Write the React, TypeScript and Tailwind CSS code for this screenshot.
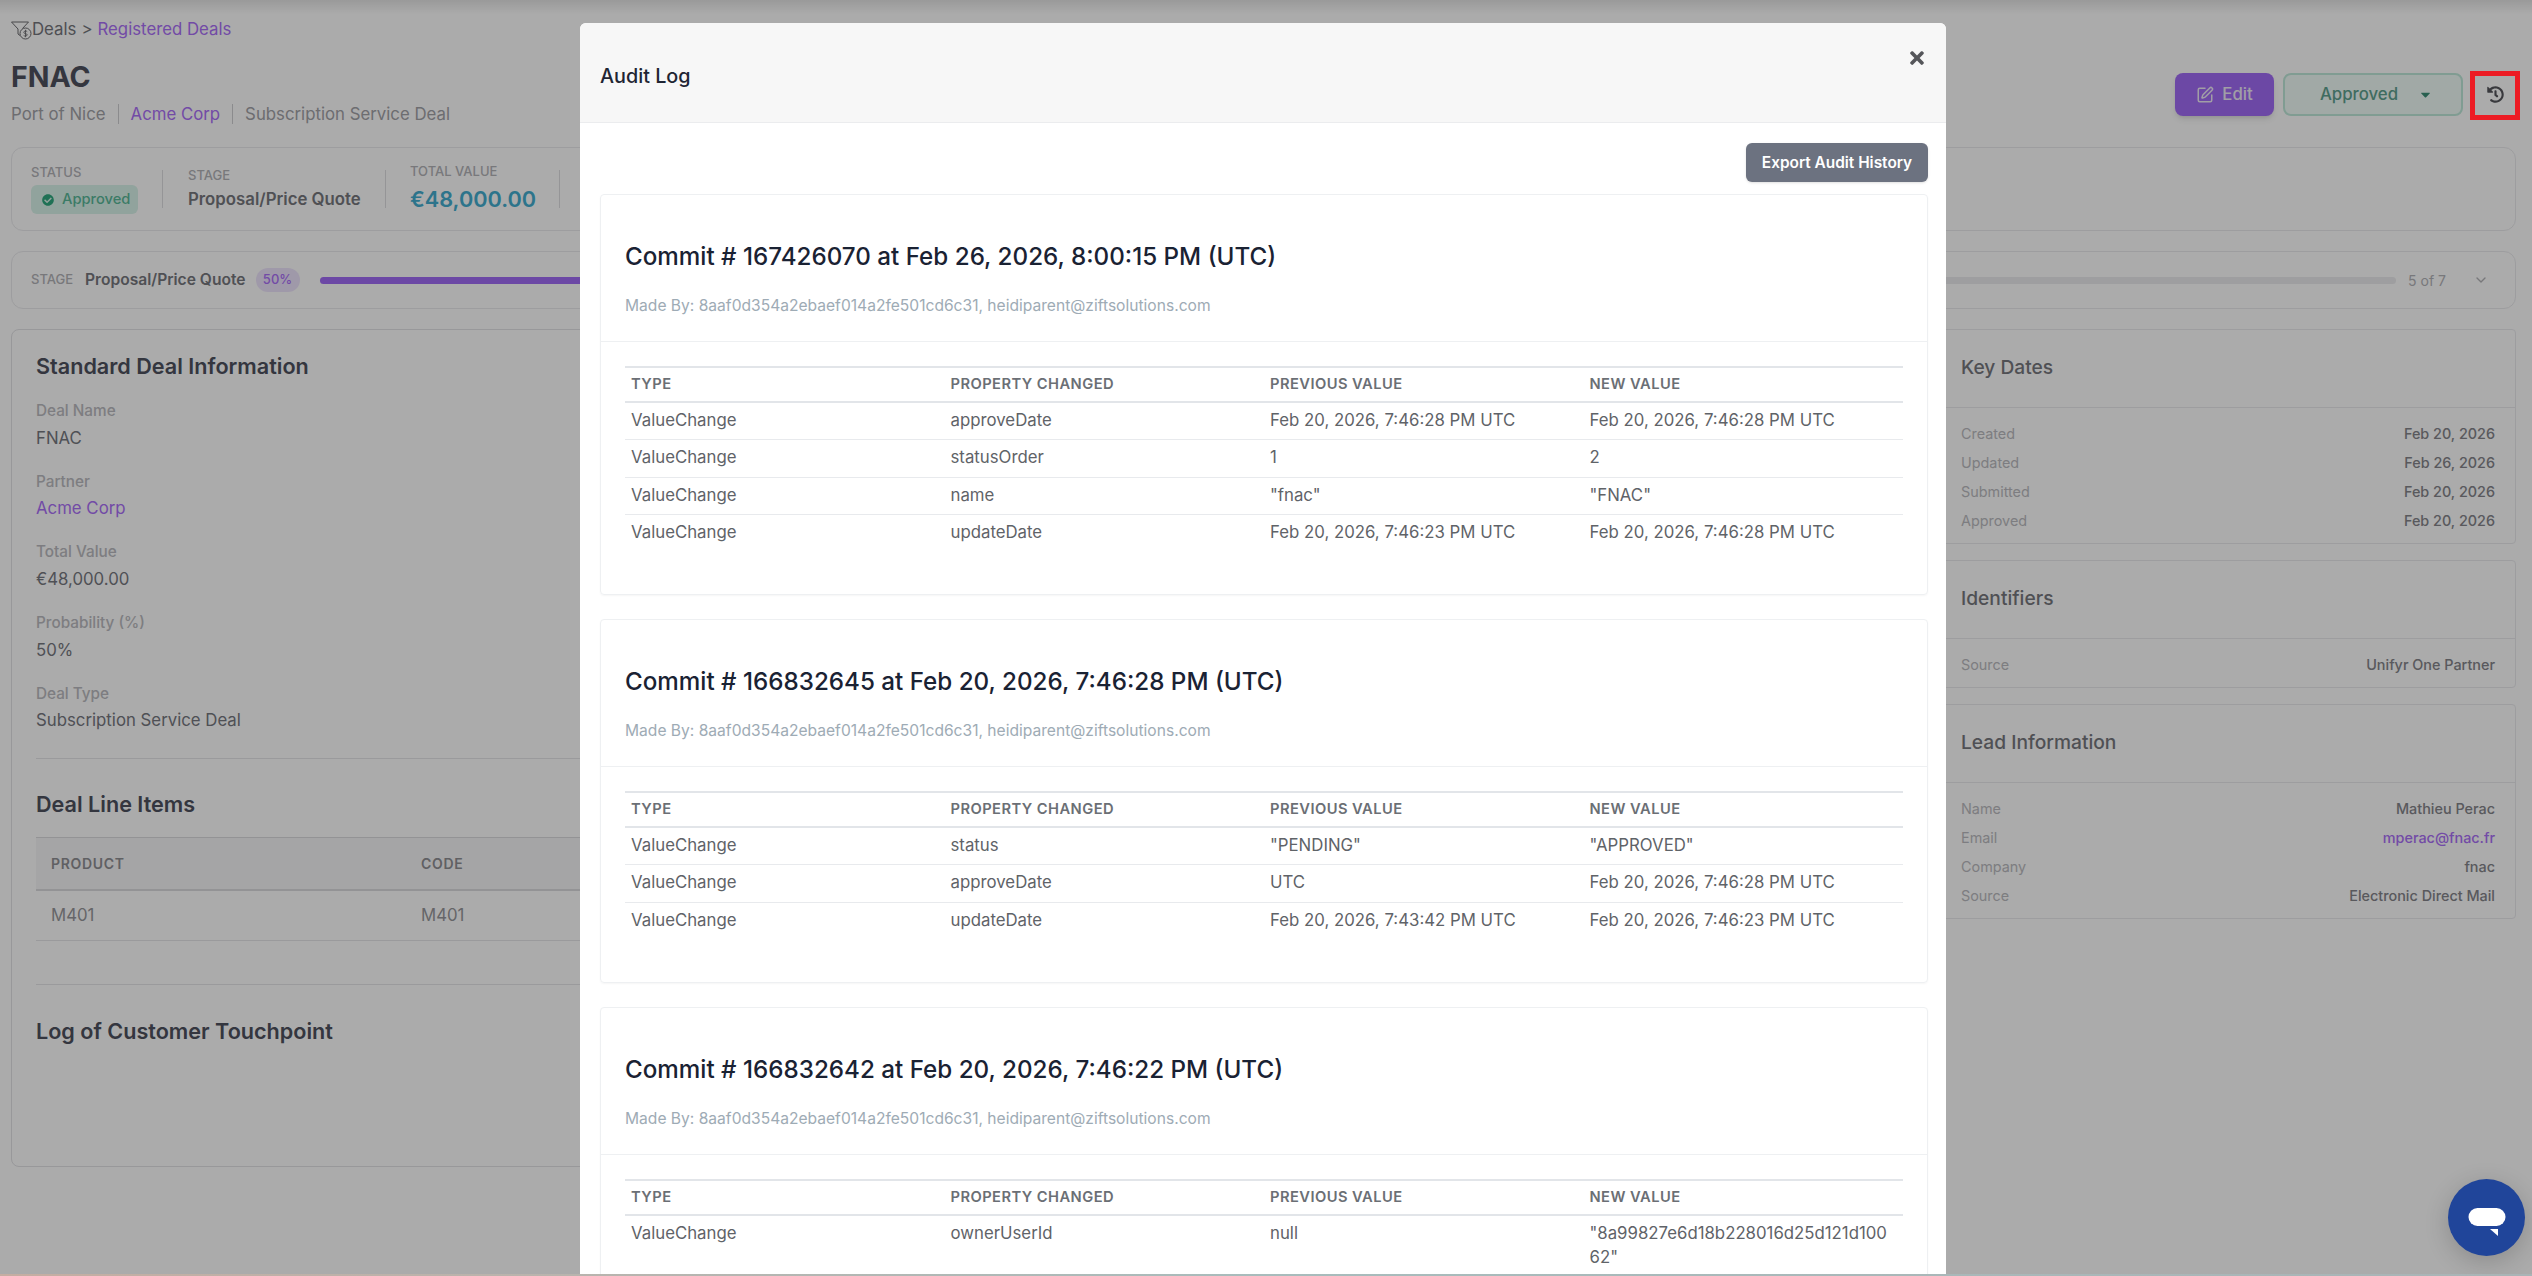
import { ChevronDown, SquarePen } from 'lucide-react'
import { FaCaretDown, FaCheckCircle, FaHistory, FaTimes } from 'react-icons/fa'

const fontInter = { fontFamily: 'Inter, "Noto Sans", sans-serif' }

interface Change {
  type: string
  property: string
  previous: string
  next: string
}

interface Commit {
  title: string
  changes: Change[]
}

const commits: Commit[] = [
  {
    title: 'Commit # 167426070 at Feb 26, 2026, 8:00:15 PM (UTC)',
    changes: [
      { type: 'ValueChange', property: 'approveDate', previous: 'Feb 20, 2026, 7:46:28 PM UTC', next: 'Feb 20, 2026, 7:46:28 PM UTC' },
      { type: 'ValueChange', property: 'statusOrder', previous: '1', next: '2' },
      { type: 'ValueChange', property: 'name', previous: '"fnac"', next: '"FNAC"' },
      { type: 'ValueChange', property: 'updateDate', previous: 'Feb 20, 2026, 7:46:23 PM UTC', next: 'Feb 20, 2026, 7:46:28 PM UTC' },
    ],
  },
  {
    title: 'Commit # 166832645 at Feb 20, 2026, 7:46:28 PM (UTC)',
    changes: [
      { type: 'ValueChange', property: 'status', previous: '"PENDING"', next: '"APPROVED"' },
      { type: 'ValueChange', property: 'approveDate', previous: 'UTC', next: 'Feb 20, 2026, 7:46:28 PM UTC' },
      { type: 'ValueChange', property: 'updateDate', previous: 'Feb 20, 2026, 7:43:42 PM UTC', next: 'Feb 20, 2026, 7:46:23 PM UTC' },
    ],
  },
  {
    title: 'Commit # 166832642 at Feb 20, 2026, 7:46:22 PM (UTC)',
    changes: [
      { type: 'ValueChange', property: 'ownerUserId', previous: 'null', next: '"8a99827e6d18b228016d25d121d10062"' },
    ],
  },
]

const dealFields = [
  { label: 'Deal Name', value: 'FNAC' },
  { label: 'Partner', value: 'Acme Corp', link: true },
  { label: 'Total Value', value: '€48,000.00' },
  { label: 'Probability (%)', value: '50%' },
  { label: 'Deal Type', value: 'Subscription Service Deal' },
]

const sideCards = [
  {
    title: 'Key Dates',
    rows: [
      { label: 'Created', value: 'Feb 20, 2026' },
      { label: 'Updated', value: 'Feb 26, 2026' },
      { label: 'Submitted', value: 'Feb 20, 2026' },
      { label: 'Approved', value: 'Feb 20, 2026' },
    ],
  },
  {
    title: 'Identifiers',
    rows: [{ label: 'Source', value: 'Unifyr One Partner' }],
  },
  {
    title: 'Lead Information',
    rows: [
      { label: 'Name', value: 'Mathieu Perac' },
      { label: 'Email', value: 'mperac@fnac.fr', link: true },
      { label: 'Company', value: 'fnac' },
      { label: 'Source', value: 'Electronic Direct Mail' },
    ],
  },
]

function FunnelIcon() {
  return (
    <svg width="21" height="19" viewBox="0 0 21 19" fill="none" stroke="#6c6c70" strokeWidth="1">
      <path d="M0.5 1h17l-6 6.5M0.5 1l6.5 7v5l2 1.5" strokeLinejoin="round" />
      <circle cx="14.5" cy="12.5" r="5.5" />
      <path d="M16.2 10.6c-.6-.8-3.4-.9-3.4.8 0 1.7 3.4.8 3.4 2.4 0 1.6-2.9 1.5-3.5.7M14.5 8.8v7.4" strokeWidth="0.9" />
    </svg>
  )
}

function ChatBubble() {
  return (
    <svg width="38" height="30" viewBox="0 0 38 30" fill="#ffffff">
      <rect x="0.5" y="0" width="37" height="18" rx="9" />
      <path d="M22 21h8v7z" />
    </svg>
  )
}

function DealPage() {
  return (
    <div className="flex flex-col pr-4 pl-[11px]">
      <div className="-mr-4 -ml-[11px] h-[14px] bg-linear-to-b from-black/10 to-transparent" />

      <div className="mt-[7px] flex h-[18px] items-center text-[16.8px] text-[#75767c]">
        <FunnelIcon />
        <span>Deals</span>
        <span className="mx-[5px]">&gt;</span>
        <span className="text-[#ab70f8]">Registered Deals</span>
      </div>

      <div className="flex items-start justify-between">
        <div>
          <h1 className="mt-[20px] text-[28.5px] leading-[36px] font-bold text-[#4e515e]">FNAC</h1>
          <div className="mt-[9px] flex items-center text-[16.8px] leading-5 text-[#a3a3a8]">
            <span className="border-r border-[#cfcfd2] pr-[12px]">Port of Nice</span>
            <span className="border-r border-[#cfcfd2] px-[12px] text-[#ab70f8]">Acme Corp</span>
            <span className="pl-[12px]">Subscription Service Deal</span>
          </div>
        </div>
        <div className="mt-[34px] mr-[-2px] flex items-center gap-[9px]">
          <button className="flex h-[43px] w-[99px] items-center justify-center gap-[8px] rounded-lg bg-[#a26cf7] text-[16.8px] font-medium text-[#f0ecf8] shadow-md">
            <SquarePen size={18} strokeWidth={2} />
            Edit
          </button>
          <button className="flex h-[43px] w-[180px] items-center justify-center gap-[20px] rounded-lg border-2 border-[#bfe9da] bg-[#f0fdf8] pl-[7px] text-[16.8px] font-medium text-[#5fa18f]">
            Approved
            <FaCaretDown size={15} className="text-[#3d8f78]" />
          </button>
          <div className="flex w-[46px] items-center justify-center text-[#55565c]">
            <FaHistory size={17} />
          </div>
        </div>
      </div>

      <div className="mt-[23px] flex h-[84px] items-center rounded-xl border border-[#ebebee] pl-[19px]">
        <div className="flex w-[131px] flex-col self-start pt-[15px]">
          <span className="text-[13px] leading-[18px] font-medium text-[#b3b3b8]">STATUS</span>
          <span className="mt-[4px] flex h-[29px] w-[107px] items-center gap-[8px] rounded-md bg-[#d9f3ea] pl-[11px] text-[14.7px] font-medium text-[#58b898]">
            <FaCheckCircle size={12} className="text-[#2fa97f]" />
            Approved
          </span>
        </div>
        <div className="h-[38px] w-px bg-[#dedee1]" />
        <div className="flex w-[222px] flex-col self-start pt-[18px] pl-[25px]">
          <span className="text-[13px] leading-[18px] font-medium text-[#b3b3b8]">STAGE</span>
          <span className="mt-[3px] text-[16.8px] leading-[24px] font-semibold whitespace-nowrap text-[#77787e]">Proposal/Price Quote</span>
        </div>
        <div className="h-[38px] w-px bg-[#dedee1]" />
        <div className="flex w-[173px] flex-col self-start pt-[14px] pl-[24px]">
          <span className="text-[13px] leading-[18px] font-medium text-[#b3b3b8]">TOTAL VALUE</span>
          <span className="mt-[4px] text-[21.7px] leading-[30px] font-semibold whitespace-nowrap text-[#43aed0]">€48,000.00</span>
        </div>
        <div className="h-[38px] w-px bg-[#dedee1]" />
      </div>

      <div className="mt-5 flex h-[58px] items-center rounded-xl border border-[#ebebee] pr-[26px] pl-[19px]">
        <span className="w-[54px] text-[13px] font-medium text-[#b3b3b8]">STAGE</span>
        <span className="text-[15.6px] font-semibold whitespace-nowrap text-[#77787e]">Proposal/Price Quote</span>
        <span className="ml-[10px] flex h-[24px] w-[44px] items-center justify-center rounded-full bg-[#eee5fd] text-[13px] font-medium text-[#ab70f8]">50%</span>
        <div className="mx-5 h-[7px] flex-1 rounded-full bg-[#ececef]">
          <div className="h-full w-1/2 rounded-full bg-[#a26cf7]" />
        </div>
        <span className="mr-[27px] -ml-[8px] text-[14px] whitespace-nowrap text-[#b3b3b8]">5 of 7</span>
        <ChevronDown size={16} className="text-[#b3b3b8]" />
      </div>

      <div className="mt-5 grid grid-cols-[1fr_576px] gap-6">
        <div className="h-[838px] rounded-lg border border-[#e3e3e6] px-6">
          <h2 className="mt-[21px] text-[21.6px] leading-[30px] font-semibold text-[#4e515e]">Standard Deal Information</h2>
          <div className="mt-[19px] flex flex-col">
            {dealFields.map((field) => (
              <div key={field.label} className="h-[70.7px]">
                <div className="text-[15.3px] leading-[21px] font-medium text-[#bbbbc0]">{field.label}</div>
                <div className={`mt-[4.5px] text-[16.8px] leading-6 ${field.link ? 'text-[#ab70f8]' : 'text-[#76787f]'}`}>{field.value}</div>
              </div>
            ))}
          </div>
          <div className="mt-[4.5px] border-t border-[#e6e6e9]" />
          <h2 className="mt-[30px] text-[21.6px] leading-[30px] font-semibold text-[#4e515e]">Deal Line Items</h2>
          <div className="mt-[18px] flex h-[54px] items-center border-t border-b-2 border-[#dcdcdf] bg-[#f7f7f8] text-[14px] font-semibold tracking-[0.05em] text-[#8f8f94]">
            <span className="w-[385px] pl-[15px]">PRODUCT</span>
            <span>CODE</span>
          </div>
          <div className="flex h-[50px] items-center border-b border-[#e6e6e9] text-[16.8px] text-[#97979c]">
            <span className="w-[385px] pl-[15px]">M401</span>
            <span>M401</span>
          </div>
          <div className="mt-[43px] border-t border-[#e6e6e9]" />
          <h2 className="mt-[31px] text-[21.6px] leading-[30px] font-semibold text-[#4e515e]">Log of Customer Touchpoint</h2>
        </div>

        <div className="flex flex-col gap-[16px]">
          {sideCards.map((card) => (
            <div key={card.title} className="rounded-sm border border-[#ebebee] pb-[12px]">
              <div className="flex h-[78px] items-center border-b border-[#ebebee] pb-[2px] pl-5">
                <h3 className="text-[19.2px] font-medium text-[#77787e]">{card.title}</h3>
              </div>
              <div className="flex flex-col gap-[8px] px-5 pt-[15px]">
                {card.rows.map((row) => (
                  <div key={card.title + row.label} className="flex h-[21px] items-center justify-between text-[14.4px]">
                    <span className="text-[#bbbbc0]">{row.label}</span>
                    <span className={`font-medium ${row.link ? 'text-[#ab70f8]' : 'text-[#85858b]'}`}>{row.value}</span>
                  </div>
                ))}
              </div>
            </div>
          ))}
        </div>
      </div>
    </div>
  )
}

function CommitCard({ commit }: { commit: Commit }) {
  return (
    <div className="rounded-sm border border-[#eef0f2] pb-[43px] shadow-[0_1px_2px_rgba(0,0,0,0.04)]">
      <div className="border-b border-[#eef0f2] px-6 pt-[47px] pb-[23px]">
        <h4 className="text-[24.2px] leading-[30px] font-medium text-[#1a2233]">{commit.title}</h4>
        <p className="mt-[22px] text-[15.6px] leading-6 text-[#9eabb5]">
          Made By: 8aaf0d354a2ebaef014a2fe501cd6c31, heidiparent@ziftsolutions.com
        </p>
      </div>
      <div className="px-6 pt-6">
        <table className="w-full table-fixed border-collapse text-[16.8px] text-[#5f6368]">
          <thead>
            <tr className="border-y-2 border-[#e2e5e9] text-left">
              <th className="px-[6px] py-[6px] text-[14.7px] leading-[21px] font-semibold tracking-[0.03em] text-[#6b6f75]">TYPE</th>
              <th className="px-[6px] py-[6px] text-[14.7px] leading-[21px] font-semibold tracking-[0.03em] text-[#6b6f75]">PROPERTY CHANGED</th>
              <th className="px-[6px] py-[6px] text-[14.7px] leading-[21px] font-semibold tracking-[0.03em] text-[#6b6f75]">PREVIOUS VALUE</th>
              <th className="px-[6px] py-[6px] text-[14.7px] leading-[21px] font-semibold tracking-[0.03em] text-[#6b6f75]">NEW VALUE</th>
            </tr>
          </thead>
          <tbody>
            {commit.changes.map((change) => (
              <tr key={change.property} className="border-b border-[#e8eaed] last:border-b-0">
                <td className="px-[6px] pt-[5px] pb-[7px] align-top leading-[24.3px]">{change.type}</td>
                <td className="px-[6px] pt-[5px] pb-[7px] align-top leading-[24.3px]">{change.property}</td>
                <td className="px-[6px] pt-[5px] pb-[7px] align-top leading-[24.3px]">{change.previous}</td>
                <td className="px-[6px] pt-[5px] pb-[7px] align-top leading-[24.3px] break-all">{change.next}</td>
              </tr>
            ))}
          </tbody>
        </table>
      </div>
    </div>
  )
}

function AuditModal() {
  return (
    <div className="absolute top-[23px] bottom-0 left-[580px] w-[1366px] overflow-hidden rounded-t-md bg-white">
      <div className="relative flex h-[100px] items-center border-b border-[#ebecee] bg-[#f7f7f7] pl-5">
        <h3 className="mt-[8px] text-[19.8px] font-medium text-[#1f2533]">Audit Log</h3>
        <FaTimes size={20} className="absolute top-[25px] right-[19px] text-[#55565a]" />
      </div>
      <div className="pt-5 pr-[18px] pl-5">
        <div className="mb-3 flex justify-end">
          <button className="h-[39px] w-[182px] rounded-md bg-[#6c7280] text-[15.4px] font-semibold text-white shadow-sm">
            Export Audit History
          </button>
        </div>
        <div className="flex flex-col gap-6">
          {commits.map((commit) => (
            <CommitCard key={commit.title} commit={commit} />
          ))}
        </div>
      </div>
    </div>
  )
}

export default function App() {
  return (
    <div className="relative h-[1276px] w-full overflow-hidden bg-white" style={fontInter}>
      <DealPage />
      <div className="absolute inset-0 bg-black/33" />
      <AuditModal />
      <div className="absolute top-[71px] left-[2470px] h-[49px] w-[50px] border-[5px] border-[#ed1c24]" />
      <div className="absolute top-[1179px] left-[2448px] flex h-[77px] w-[77px] items-center justify-center rounded-full bg-[#20459a] pt-[11px] shadow-[0_6px_24px_rgba(0,0,0,0.18)]">
        <ChatBubble />
      </div>
      <div className="absolute right-0 bottom-0 left-0 h-[2px] bg-linear-to-r from-[#c5ada2] via-[#a8bcbc] to-[#aab4b6]" />
    </div>
  )
}
